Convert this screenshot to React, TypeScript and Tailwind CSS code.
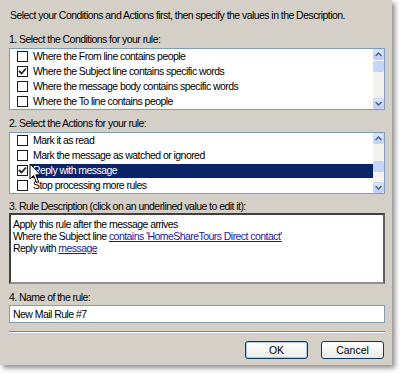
import React from "react";

const conditions = [
  { label: "Where the From line contains people", checked: false },
  { label: "Where the Subject line contains specific words", checked: true },
  { label: "Where the message body contains specific words", checked: false },
  { label: "Where the To line contains people", checked: false },
];

const actions = [
  { label: "Mark it as read", checked: false, selected: false },
  { label: "Mark the message as watched or ignored", checked: false, selected: false },
  { label: "Reply with message", checked: true, selected: true },
  { label: "Stop processing more rules", checked: false, selected: false },
];

function Checkbox({ checked }: { checked: boolean }) {
  return (
    <div className="w-[11px] h-[11px] shrink-0 border border-[#1c1c1c] bg-white flex items-center justify-center">
      {checked && (
        <svg width="9" height="9" viewBox="0 0 9 9">
          <path d="M1 4 L3.5 6.5 L8 1.5" fill="none" stroke="#222" strokeWidth="1.8" />
        </svg>
      )}
    </div>
  );
}

function Arrow({ up }: { up?: boolean }) {
  return (
    <div className="w-[11px] h-[11px] rounded-[2px] border border-[#c3d3fd] bg-gradient-to-b from-[#dfe8fe] to-[#bccdf8] flex items-center justify-center">
      <svg width="7" height="5" viewBox="0 0 7 5">
        <path
          d={up ? "M0.5 4 L3.5 1 L6.5 4" : "M0.5 1 L3.5 4 L6.5 1"}
          fill="none"
          stroke="#4d6185"
          strokeWidth="1.5"
        />
      </svg>
    </div>
  );
}

function ScrollBar({ thumbClass }: { thumbClass: string }) {
  return (
    <div className="w-[11px] h-full bg-[#f4f3ee] flex flex-col">
      <Arrow up />
      <div className="flex-1">
        <div className={`h-[11px] rounded-[2px] border border-[#c3d3fd] bg-[#c6d5fb] ${thumbClass}`} />
      </div>
      <Arrow />
    </div>
  );
}

function Cursor() {
  return (
    <svg className="absolute left-[19px] top-[30px]" width="13" height="21" viewBox="0 0 13 21">
      <path
        d="M1 1 L1 16 L4.5 12.5 L7.5 19.5 L9.5 18.5 L6.8 11.8 L11.5 11.8 Z"
        fill="white"
        stroke="black"
        strokeWidth="1"
      />
    </svg>
  );
}

export default function App() {
  return (
    <div className="w-[400px] h-[373px] bg-white" style={{ fontFamily: '"Liberation Sans", Arial, sans-serif' }}>
      <div className="w-[392px] h-[365px] bg-[#d4d0c8] shadow-[3px_3px_5px_rgba(0,0,0,0.45)] pl-[9px] pr-[7px] pt-[9px] text-[10.5px] leading-[13px] text-black tracking-[-0.55px]">
        <p className="pl-[1px]">Select your Conditions and Actions first, then specify the values in the Description.</p>

        {/* Conditions */}
        <p className="mt-[11px]">1. Select the Conditions for your rule:</p>
        <div className="mt-[2px] h-[62px] border border-[#7f9db9] bg-white flex">
          <div className="flex-1 pl-[7px]">
            {conditions.map((c) => (
              <div key={c.label} className="h-[15px] flex items-center gap-[5px]">
                <Checkbox checked={c.checked} />
                <span>{c.label}</span>
              </div>
            ))}
          </div>
          <ScrollBar thumbClass="mt-[1px]" />
        </div>

        {/* Actions */}
        <p className="mt-[7px]">2. Select the Actions for your rule:</p>
        <div className="mt-[2px] h-[62px] border border-[#7f9db9] bg-white flex">
          <div className="relative flex-1 pl-[7px]">
            {actions.map((a) => (
              <div key={a.label} className="h-[15px] flex items-center gap-[3px]">
                <Checkbox checked={a.checked} />
                <span
                  className={
                    a.selected
                      ? "flex-1 h-[14px] flex items-center pl-[2px] bg-[#0a246a] text-white"
                      : "pl-[2px]"
                  }
                >
                  {a.label}
                </span>
              </div>
            ))}
            <Cursor />
          </div>
          <ScrollBar thumbClass="mt-[17px]" />
        </div>

        {/* Rule description */}
        <p className="mt-[6px]">3. Rule Description (click on an underlined value to edit it):</p>
        <div className="h-[71px] border-2 border-t-[#404040] border-l-[#404040] border-r-[#606060] border-b-[#909090] bg-white px-[2px] pt-[3px] leading-[12px]">
          <p>Apply this rule after the message arrives</p>
          <p>
            Where the Subject line{" "}
            <span className="text-[#1a1aa0] underline">contains 'HomeShareTours Direct contact'</span>
          </p>
          <p>
            Reply with <span className="text-[#1a1aa0] underline">message</span>
          </p>
        </div>

        {/* Name */}
        <p className="mt-[7px]">4. Name of the rule:</p>
        <div className="mt-[1px] h-[18px] border border-[#7f9db9] bg-white flex items-center px-[3px]">
          New Mail Rule #7
        </div>

        <div className="mt-[8px] border-t border-t-[#808080] border-b border-b-white" />

        <div className="mt-[8px] flex justify-end gap-[13px] pr-[1px]">
          <button className="w-[63px] h-[18px] rounded-[3px] border border-[#003c74] bg-gradient-to-b from-white to-[#ecebe6] shadow-[inset_0_0_0_1px_#a9c5f3] text-[10.5px] tracking-normal">
            OK
          </button>
          <button className="w-[63px] h-[18px] rounded-[3px] border border-[#003c74] bg-gradient-to-b from-white to-[#ecebe6] text-[10.5px] tracking-normal">
            Cancel
          </button>
        </div>
      </div>
    </div>
  );
}
